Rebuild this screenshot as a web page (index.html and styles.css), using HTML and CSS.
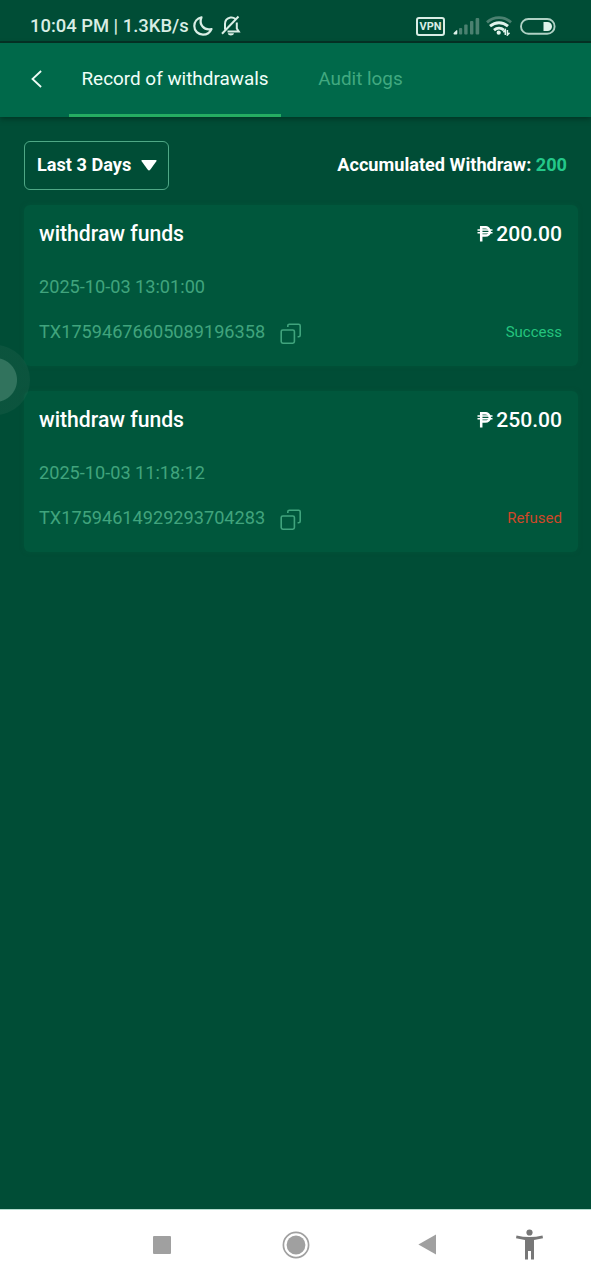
FILE: index.html
```html
<!DOCTYPE html>
<html lang="en">
<head>
<meta charset="utf-8">
<meta name="viewport" content="width=device-width, initial-scale=1">
<title>Record of withdrawals</title>
<link rel="stylesheet" href="styles.css">
</head>
<body>
<div class="screen">
  <div class="status-bar">
    <span class="status-time">10:04 PM | 1.3KB/s</span>
    <svg class="icon-moon" width="20" height="20" viewBox="0 0 20 20"><path d="M8.500 1.300C4.200 2.200 1.300 5.800 1.300 10C1.300 14.900 5.100 18.600 10 18.600C13.800 18.600 17 16.500 18.500 13C11 14.800 5.500 8.500 8.500 1.300Z"/></svg>
    <svg class="icon-bell" width="20" height="22" viewBox="0 0 20 22"><path d="M4 14.500V9C4 5.500 6.300 3.200 9.500 2.600C11.300 2.300 13 2.800 14.200 3.800M15.800 7.500V13.500L17.800 16.600H6.500M1 18.800L17.500 1.500"/><path class="clapper" d="M6.800 18.300H13C12.500 21.200 7.300 21.200 6.800 18.300Z"/></svg>
    <div class="status-right">
      <span class="vpn">VPN</span>
      <svg width="27" height="18" viewBox="0 0 27 18"><g fill="#4b8170"><rect x="6" y="11" width="3.200" height="6.500" rx="1"/><rect x="11.200" y="7.500" width="3.400" height="10" rx="1"/><rect x="17" y="4" width="3.400" height="13.500" rx="1"/><rect x="22.600" y="1" width="3.600" height="16.500" rx="1"/></g><path d="M.6 16L3.500 13.200Q4.300 12.700 4.300 13.700V16.500Q4.300 17.500 3.300 17.500H1.300Q0 17.400 .6 16Z" fill="#e0f3eb"/></svg>
      <svg class="icon-wifi" width="26" height="20" viewBox="0 0 26 20"><g fill="none" stroke-width="2.900"><path d="M1 6.300C8 .1 18 .1 25 6.300" stroke="#4b8170"/><path d="M4 10.200C9.500 5.500 16.500 5.500 22 10.200M8 14.100C11 11.600 15 11.600 18 14.100" stroke="#e0f3eb"/></g><circle cx="12.700" cy="16.700" r="2.100" fill="#e0f3eb"/><path d="M17.300 16.300L19.300 14V19M21.400 14V19L23.500 16.700" fill="none" stroke="#e0f3eb" stroke-width="1.500"/></svg>
      <svg class="icon-battery" width="36" height="17" viewBox="0 0 36 17"><rect x="1" y="1" width="33.600" height="14.800" rx="7.400" fill="none" stroke="#afd1c4" stroke-width="1.900"/><path d="M23.500 4H27.500A4.500 4.500 0 0 1 27.500 13H23.500Z" fill="#e0f3eb"/></svg>
    </div>
  </div>

  <header class="header">
    <button class="back" aria-label="Back"><svg width="12" height="18" viewBox="0 0 12 18"><path d="M10.100 1L1.500 9L10.100 17"/></svg></button>
    <nav class="tabs">
      <a class="tab tab-active">Record of withdrawals</a>
      <a class="tab tab-audit">Audit logs</a>
    </nav>
  </header>

  <main class="content">
    <div class="filters">
      <button class="period"><span>Last 3 Days</span><svg width="16" height="11" viewBox="0 0 16 11"><path d="M1.300 0H14.700Q16.300 0 15.200 1.600L9.200 9.800Q8 11.200 6.800 9.800L.8 1.600Q-.3 0 1.300 0Z"/></svg></button>
      <div class="total">Accumulated Withdraw: <b>200</b></div>
    </div>

    <article class="card">
      <div class="card-row card-head"><h2>withdraw funds</h2><div class="amount"><svg width="16" height="16" viewBox="0 0 16 16"><path d="M4.200 15.500V1.200H8.200C14.200 1.200 14.200 9.600 8.200 9.600H4.200"/><path class="bars" d="M.5 3.900H15.500M.5 6.800H15.500"/></svg><span>200.00</span></div></div>
      <div class="date">2025-10-03 13:01:00</div>
      <div class="card-row card-foot"><span class="txn">TX17594676605089196358</span><svg class="copy" width="22" height="22" viewBox="0 0 22 22"><path d="M7.800 4V2.800Q7.800 1.200 9.400 1.200H18.600Q20.200 1.200 20.200 2.800V12.200Q20.200 13.800 18.600 13.800H17.600"/><rect x="1.200" y="7" width="13.200" height="13.200" rx="1.600"/></svg><span class="state success">Success</span></div>
    </article>

    <article class="card">
      <div class="card-row card-head"><h2>withdraw funds</h2><div class="amount"><svg width="16" height="16" viewBox="0 0 16 16"><path d="M4.200 15.500V1.200H8.200C14.200 1.200 14.200 9.600 8.200 9.600H4.200"/><path class="bars" d="M.5 3.900H15.500M.5 6.800H15.500"/></svg><span>250.00</span></div></div>
      <div class="date">2025-10-03 11:18:12</div>
      <div class="card-row card-foot"><span class="txn">TX17594614929293704283</span><svg class="copy" width="22" height="22" viewBox="0 0 22 22"><path d="M7.800 4V2.800Q7.800 1.200 9.400 1.200H18.600Q20.200 1.200 20.200 2.800V12.200Q20.200 13.800 18.600 13.800H17.600"/><rect x="1.200" y="7" width="13.200" height="13.200" rx="1.600"/></svg><span class="state refused">Refused</span></div>
    </article>
  </main>

  <div class="assist"></div>

  <footer class="system-nav">
    <svg class="nav-recent" width="18" height="18" viewBox="0 0 18 18"><rect width="18" height="18" rx="1" fill="#a0a0a0"/></svg>
    <svg class="nav-home" width="28" height="28" viewBox="0 0 28 28"><circle cx="14" cy="14" r="12.600" fill="none" stroke="#a0a0a0" stroke-width="1.700"/><circle cx="14" cy="14" r="9.400" fill="#a0a0a0"/></svg>
    <svg class="nav-back" width="18" height="21" viewBox="0 0 18 21"><path d="M18 .6V20.400L.4 10.500Z" fill="#a0a0a0"/></svg>
    <svg class="nav-access" width="27" height="31" viewBox="0 0 27 31"><g fill="#777"><circle cx="13.500" cy="3.500" r="3.100"/><path d="M.5 6.500Q13.500 9.600 26.500 6.500L27 9.300L18 11V30.500H15V22H12V30.500H9V11L0 9.300Z"/></g></svg>
  </footer>
</div>
</body>
</html>
```
FILE: styles.css
```css
* { box-sizing: border-box; }
body { margin: 0; font-family: Roboto, sans-serif; background: #004d36; }
svg { display: block; flex: none; }
button { font: inherit; color: inherit; background: none; border: 0; padding: 0; }
h2 { margin: 0; }
.screen { position: relative; width: 591px; height: 1280px; display: flex; flex-direction: column; background: #004d36; overflow: hidden; white-space: nowrap; }

.status-bar { height: 43px; flex: none; display: flex; align-items: center; padding: 11px 35px 0 30px; border-bottom: 2px solid #053225; color: #d9eee5; }
.status-time { width: 163px; font-size: 18.4px; font-weight: 500; line-height: 20px; }
.icon-moon path { fill: none; stroke: #d9eee5; stroke-width: 2.2; stroke-linejoin: round; }
.icon-bell { margin-left: 8px; }
.icon-bell path { fill: none; stroke: #d9eee5; stroke-width: 2; }
.icon-bell .clapper { fill: #d9eee5; stroke: none; }
.status-right { margin-left: auto; display: flex; align-items: center; }
.vpn { width: 29px; height: 19px; margin-right: 8px; border: 2px solid #d9eee5; border-radius: 3px; font-size: 11px; font-weight: 700; line-height: 15px; text-align: center; }
.icon-wifi { margin-left: 6px; }
.icon-battery { margin-left: 8px; }

.header { height: 74px; flex: none; display: flex; align-items: stretch; background: #00694a; box-shadow: 0 2px 5px rgba(0, 35, 22, .55); }
.back { width: 69px; padding: 0 0 2px 31px; }
.back path { fill: none; stroke: #eefcf6; stroke-width: 1.8; }
.tabs { display: flex; font-size: 18.9px; line-height: 22px; }
.tab { padding-top: 25px; text-align: center; color: #41a980; }
.tab-active { width: 212px; color: #f0fff9; border-bottom: 3px solid #25ad62; }
.tab-audit { width: 159px; }

.content { flex: 1; padding: 24px 13px 0 24px; }
.filters { display: flex; justify-content: space-between; height: 49px; margin-bottom: 15px; padding-right: 11px; font-weight: 700; color: #fff; }
.period { display: flex; align-items: center; justify-content: space-between; width: 145px; height: 49px; padding: 0 11px 2px 12px; border: 1px solid #4fa886; border-radius: 6px; font-size: 18.15px; }
.period svg { margin-top: 2px; }
.period path { fill: #fff; }
.total { font-size: 18.15px; line-height: 48px; }
.total b { font-weight: 700; color: #24c88a; }

.card { height: 161px; margin-bottom: 25px; padding: 17px 16px 0 15px; border-radius: 6px; background: #00573c; box-shadow: 0 0 4px rgba(0, 87, 60, .6); }
.card-row { display: flex; align-items: center; }
.card-head { justify-content: space-between; height: 24px; color: #fff; }
.card h2 { font-size: 21.15px; font-weight: 500; line-height: 24px; }
.amount { display: flex; align-items: center; gap: 3px; font-size: 21.1px; font-weight: 500; line-height: 24px; }
.amount svg { margin-top: -1px; }
.amount path { fill: none; stroke: #fff; stroke-width: 2.5; }
.amount .bars { stroke-width: 1.5; }
.date { margin-top: 30px; font-size: 18.15px; line-height: 22px; color: #40a47d; }
.card-foot { height: 24px; margin-top: 22px; color: #40a47d; }
.txn { width: 241px; margin-top: -2px; font-size: 18.15px; }
.copy { margin-top: 3px; }
.copy path, .copy rect { fill: none; stroke: #40a47d; stroke-width: 1.6; }
.state { margin-left: auto; font-size: 15px; }
.success { color: #24c47e; }
.refused { color: #cf4728; }

/* Floating assistive button, docked past the left edge */
.assist { position: absolute; left: -40px; top: 345px; width: 70px; height: 70px; border-radius: 50%; background: radial-gradient(circle, #31735d 0 21.500px, rgba(70, 120, 100, .16) 22.500px); }

.system-nav { height: 71px; flex: none; display: flex; align-items: center; padding: 0 48px 1px 153px; background: #fff; border-top: 1px solid #b4ddcf; }
.nav-home { margin-left: 111px; }
.nav-back { margin-left: 108px; }
.nav-access { margin-left: 80px; }
```
